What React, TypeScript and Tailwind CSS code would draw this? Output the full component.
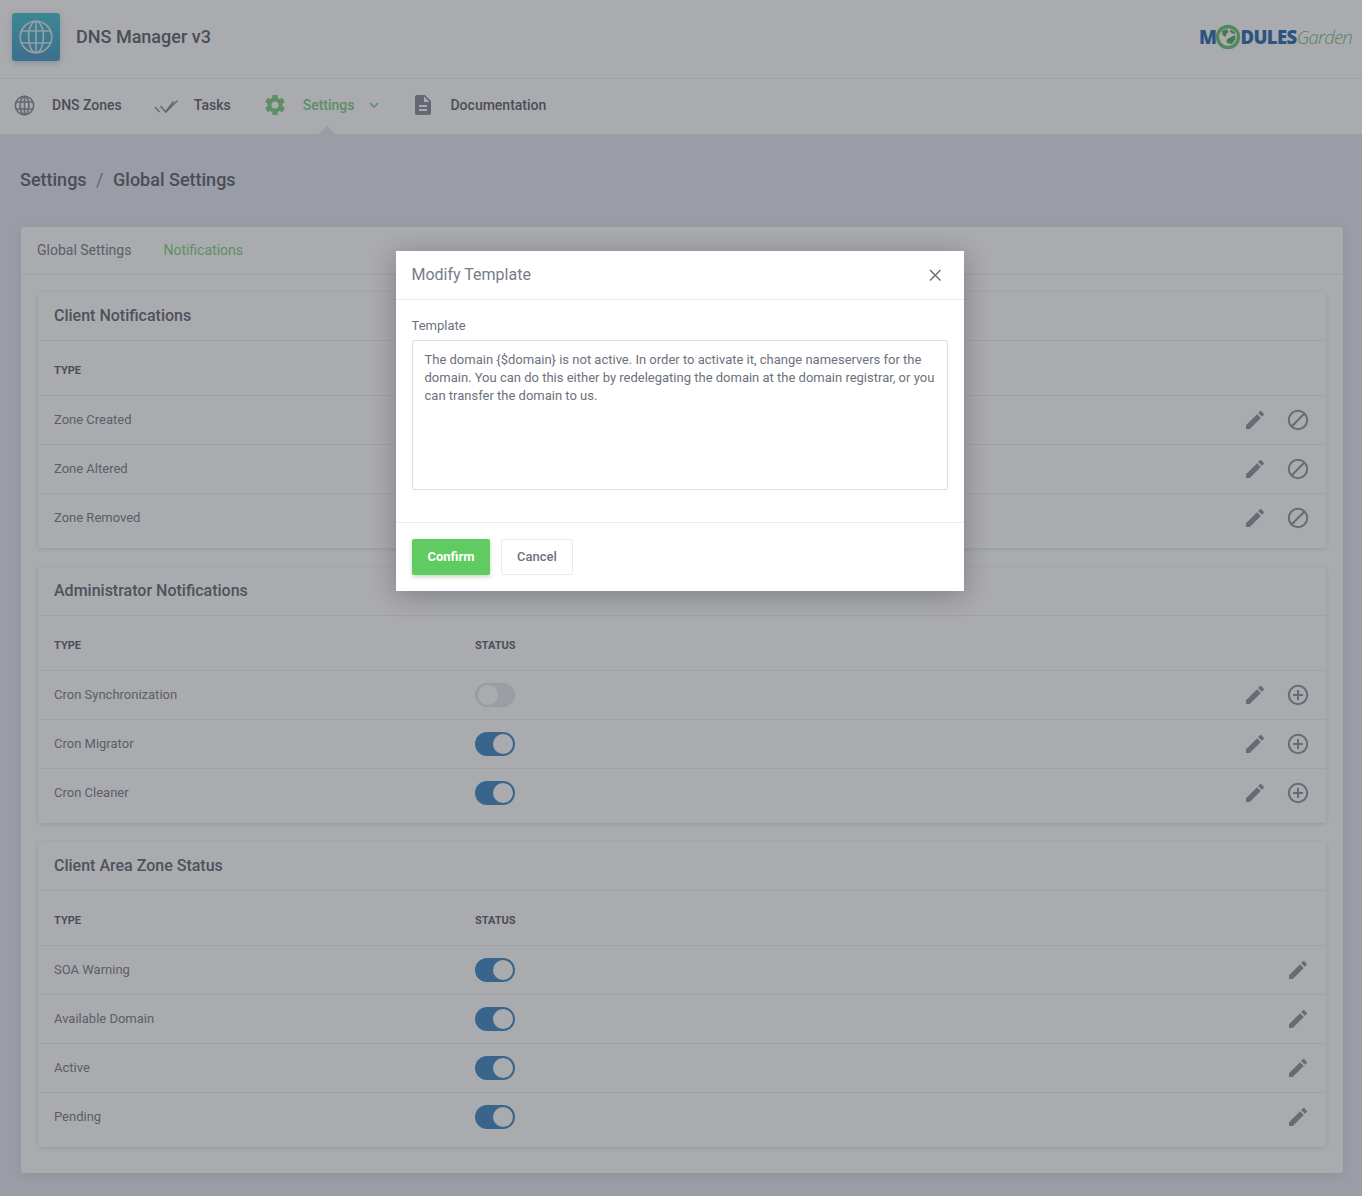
const font = "font-['Roboto',sans-serif]";

const PENCIL = 'M20.71,7.04C21.1,6.65 21.1,6 20.71,5.63L18.37,3.29C18,2.9 17.35,2.9 16.96,3.29L15.12,5.12L18.87,8.87M3,17.25V21H6.75L17.81,9.93L14.06,6.18L3,17.25Z';
const COG = 'M12,15.5A3.5,3.5 0 0,1 8.5,12A3.5,3.5 0 0,1 12,8.5A3.5,3.5 0 0,1 15.5,12A3.5,3.5 0 0,1 12,15.5M19.43,12.97C19.47,12.65 19.5,12.33 19.5,12C19.5,11.67 19.47,11.34 19.43,11L21.54,9.37C21.73,9.22 21.78,8.95 21.66,8.73L19.66,5.27C19.54,5.05 19.27,4.96 19.05,5.05L16.56,6.05C16.04,5.66 15.5,5.32 14.87,5.07L14.5,2.42C14.46,2.18 14.25,2 14,2H10C9.75,2 9.54,2.18 9.5,2.42L9.13,5.07C8.5,5.32 7.96,5.66 7.44,6.05L4.95,5.05C4.73,4.96 4.46,5.05 4.34,5.27L2.34,8.73C2.21,8.95 2.27,9.22 2.46,9.37L4.57,11C4.53,11.34 4.5,11.67 4.5,12C4.5,12.33 4.53,12.65 4.57,12.97L2.46,14.63C2.27,14.78 2.21,15.05 2.34,15.27L4.34,18.73C4.46,18.95 4.73,19.03 4.95,18.95L7.44,17.94C7.96,18.34 8.5,18.68 9.13,18.93L9.5,21.58C9.54,21.82 9.75,22 10,22H14C14.25,22 14.46,21.82 14.5,21.58L14.87,18.93C15.5,18.67 16.04,18.34 16.56,17.94L19.05,18.95C19.27,19.03 19.54,18.95 19.66,18.73L21.66,15.27C21.78,15.05 21.73,14.78 21.54,14.63L19.43,12.97Z';

function Globe({ size, sw }: { size: number; sw: number }) {
  return (
    <svg width={size} height={size} viewBox="0 0 24 24" fill="none" stroke="currentColor" strokeWidth={sw}>
      <circle cx="12" cy="12" r="10.5" />
      <ellipse cx="12" cy="12" rx="5" ry="10.5" />
      <path d="M12 1.5v21M2.6 8h18.8M2.6 16h18.8" />
    </svg>
  );
}

function Pencil() {
  return (
    <svg width="24" height="24" viewBox="0 0 24 24" fill="#92959e" className="shrink-0"><path d={PENCIL} /></svg>
  );
}

function Action({ kind }: { kind: 'ban' | 'plus' }) {
  return (
    <svg width="24" height="24" viewBox="0 0 24 24" fill="none" stroke="#92959e" strokeWidth="2" className="shrink-0">
      <circle cx="12" cy="12" r="9.2" />
      {kind === 'ban' ? <path d="M5.8 18.2 18.2 5.8" /> : <path d="M12 7v10M7 12h10" />}
    </svg>
  );
}

function Toggle({ on }: { on: boolean }) {
  return on ? (
    <div className="w-10 h-6 rounded-full bg-[#4489c6] flex items-center justify-end pr-[2px]">
      <div className="w-5 h-5 rounded-full bg-white" />
    </div>
  ) : (
    <div className="w-10 h-6 rounded-full bg-[#e8eaf0] flex items-center pl-[2px] border border-[#dfe1e9]">
      <div className="w-5 h-5 rounded-full bg-white" />
    </div>
  );
}

type Row = { name: string; on?: boolean };

function Panel({ title, rows, action, last }: { title: string; rows: Row[]; action?: 'ban' | 'plus'; last?: boolean }) {
  return (
    <div className={`rounded-[2px] bg-white shadow-[0_1px_4px_rgba(60,70,100,0.18)] ${last ? '' : 'mb-[19px]'}`}>
      <div className="h-[49px] flex items-center px-4 border-b border-[#eceef3]">
        <h3 className="text-[16px] font-medium text-[#666b77]">{title}</h3>
      </div>
      <div className="h-[55px] grid grid-cols-[421px_1fr] items-center px-4 pt-[6px] border-b border-[#eceef3] text-[11px] font-bold uppercase text-[#5f6470]">
        <span>Type</span>
        <span>Status</span>
      </div>
      {rows.map((r, i) => (
        <div key={r.name} className={`grid grid-cols-[421px_1fr_auto] px-4 text-[13px] text-[#7b808c] ${i === rows.length - 1 ? 'h-[54px] pb-[7px]' : 'h-[49px] border-b border-[#eceef3]'} items-center`}>
          <span>{r.name}</span>
          <div><Toggle on={!!r.on} /></div>
          <div className="flex items-center gap-[19px]">
            {action && <Pencil />}
            {action ? <Action kind={action} /> : <Pencil />}
          </div>
        </div>
      ))}
    </div>
  );
}

function Logo() {
  return (
    <div className="flex items-center mr-[10px] h-6 -mt-[4px]">
      <span className="font-['Open_Sans',sans-serif] font-extrabold text-[18.500px] tracking-[-0.5px] text-[#2e6fb5]">M</span>
      <svg width="26" height="26" viewBox="0 0 26 26" className="shrink-0 -mx-[1px]">
        <circle cx="13" cy="13" r="10.5" fill="#fff" stroke="#6fc47a" strokeWidth="3.4" />
        <path d="M7 7l5-2 1.500 3-2 2-1 3-3-2zM14 14l6-3 .5 4-3.500 5-5-1-.5-3zM15.500 5.500l4 2.500 .5 2-3-.5-2-2z" fill="#5aa866" />
      </svg>
      <span className="font-['Open_Sans',sans-serif] font-extrabold text-[18.500px] tracking-[-0.6px] text-[#2e6fb5]">DULES</span>
      <span className="font-['Open_Sans',sans-serif] font-light italic text-[18.500px] tracking-[-0.8px] text-[#6fc47a]">Garden</span>
    </div>
  );
}

export default function App() {
  return (
    <div className={`relative min-h-[1196px] bg-[#e5e8f0] ${font}`}>
      <header className="bg-white">
        <div className="h-[79px] flex items-center justify-between pl-3 pr-0 border-b border-[#eceef3]">
          <div className="flex items-center">
            <div className="w-[48px] h-[48px] rounded-[3px] bg-gradient-to-b from-[#48c3d4] to-[#4a9cc9] flex items-center justify-center text-[#dfe9ee] shadow-[0_2px_6px_rgba(60,120,140,0.3)] -mt-[4px]">
              <Globe size={36} sw={1.1} />
            </div>
            <span className="ml-4 text-[18px] font-medium text-[#5f6470] -mt-[6px]">DNS Manager v3</span>
          </div>
          <Logo />
        </div>
        <nav className="relative h-[55px] flex items-center pl-3 pb-[3px] text-[14px] font-medium text-[#5f6470]">
          <div className="flex items-center">
            <span className="w-6 h-6 flex items-center justify-center text-[#8a8f9c]"><Globe size={21} sw={1.9} /></span>
            <span className="ml-4">DNS Zones</span>
          </div>
          <div className="flex items-center ml-[32px]">
            <svg width="24" height="24" viewBox="0 0 24 24" fill="none" stroke="#8a8f9c" strokeWidth="1.5">
              <path d="M1 14l4.500 5M6.500 13l5 6 8-10.500M12 19L23.500 7.500" />
            </svg>
            <span className="ml-4">Tasks</span>
          </div>
          <div className="flex items-center ml-[32px] text-[#80cf88]">
            <svg width="24" height="24" viewBox="0 0 24 24" fill="#80cf88"><path d={COG} /></svg>
            <span className="ml-[16px]">Settings</span>
            <svg width="12" height="12" viewBox="0 0 12 12" fill="none" stroke="#80cf88" strokeWidth="1.6" className="ml-[14px]">
              <path d="M2 4l4 4 4-4" />
            </svg>
          </div>
          <div className="flex items-center ml-[31px]">
            <svg width="24" height="24" viewBox="0 0 24 24" fill="#8a8f9c">
              <path d="M14 2H6a2 2 0 0 0-2 2v16a2 2 0 0 0 2 2h12a2 2 0 0 0 2-2V8zM16 18H8v-2h8zm0-4H8v-2h8zM13 9V3.500L18.500 9z" />
            </svg>
            <span className="ml-[15px]">Documentation</span>
          </div>
          <div className="absolute left-[321px] top-[49px] w-3 h-3 rotate-45 bg-[#e5e8f0]" />
        </nav>
      </header>

      <div className="px-5">
        <div className="h-[93px] flex items-center pb-[2px] text-[18px] font-medium text-[#5f6470]">
          <span>Settings</span>
          <span className="mx-[9.500px] font-normal text-[#8a8f9c]">/</span>
          <span>Global Settings</span>
        </div>

        <main className="ml-[1px] mr-[-1px] w-[1322px] h-[946px] rounded-[2px] bg-white shadow-[0_2px_10px_rgba(60,70,100,0.12)]">
          <div className="h-[48px] flex items-center pl-4 gap-8 text-[14px] border-b border-[#eceef3] text-[#7b808c]">
            <span>Global Settings</span>
            <span className="text-[#80cf88]">Notifications</span>
          </div>
          <div className="px-[17px] pt-[17px]">
            <Panel title="Client Notifications" action="ban" rows={[{ name: 'Zone Created' }, { name: 'Zone Altered' }, { name: 'Zone Removed' }]} />
            <Panel title="Administrator Notifications" action="plus" rows={[{ name: 'Cron Synchronization' }, { name: 'Cron Migrator', on: true }, { name: 'Cron Cleaner', on: true }]} />
            <Panel title="Client Area Zone Status" last rows={[{ name: 'SOA Warning', on: true }, { name: 'Available Domain', on: true }, { name: 'Active', on: true }, { name: 'Pending', on: true }]} />
          </div>
        </main>
      </div>

      <div className="absolute inset-0 bg-[#2a2d35]/40 pl-[396px] pt-[251px]">
        <div className="w-[568px] h-[340px] bg-white shadow-[0_4px_24px_rgba(20,25,40,0.3)]">
          <div className="h-[49px] flex items-center justify-between pl-4 pr-[22px] border-b border-[#e9ebf1]">
            <h2 className="text-[16px] text-[#777c88] -ml-[0.5px]">Modify Template</h2>
            <svg width="14" height="14" viewBox="0 0 14 14" fill="none" stroke="#6c717d" strokeWidth="1.500">
              <path d="M2 2l10.500 10.500M12.500 2L2 12.500" />
            </svg>
          </div>
          <div className="h-[223px] px-4 pt-[17px] border-b border-[#e9ebf1]">
            <label className="block text-[13px] leading-[18px] text-[#6c717d] mb-[5px] -ml-[0.5px]">Template</label>
            <textarea
              readOnly
              className="block w-[536px] h-[150px] resize-none rounded-[2px] border border-[#dcdfe8] px-[11.500px] py-[10px] text-[13px] leading-[18px] text-[#6c717d] outline-none"
              defaultValue="The domain {$domain} is not active. In order to activate it, change nameservers for the domain. You can do this either by redelegating the domain at the domain registrar, or you can transfer the domain to us."
            />
          </div>
          <div className="flex items-center gap-[11px] px-4 pt-[16px] text-[13px] font-medium">
            <button className="w-[78px] h-9 rounded-[2px] bg-[#5fcb60] text-white font-bold shadow-[0_2px_4px_rgba(60,120,60,0.3)]">Confirm</button>
            <button className="w-[72px] h-9 rounded-[2px] border border-[#e9ebf1] bg-white text-[#6c717d]">Cancel</button>
          </div>
        </div>
      </div>
    </div>
  );
}
